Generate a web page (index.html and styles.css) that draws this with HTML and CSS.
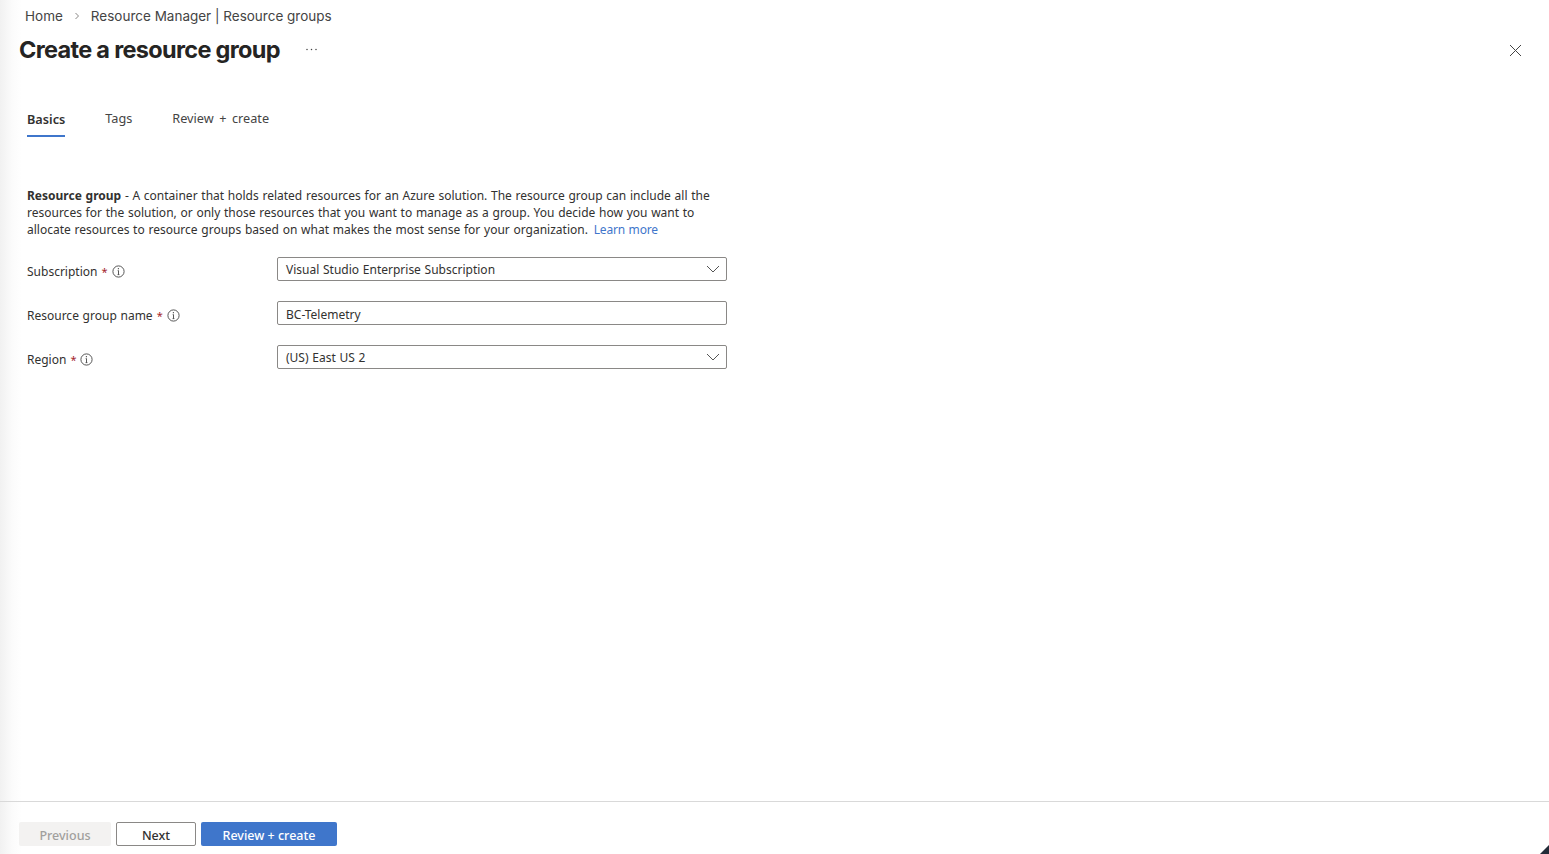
FILE: index.html
```html
<!DOCTYPE html>
<html lang="en">
<head>
<meta charset="utf-8">
<title>Create a resource group</title>
<link rel="stylesheet" href="styles.css">
</head>
<body>
<div class="page">
  <header class="top">
    <nav class="crumbs">
      <span>Home</span>
      <svg class="crumb-sep" width="6" height="8" viewBox="0 0 6 8"><path d="M1.5 1l3 3-3 3" fill="none" stroke="#8a8886" stroke-width="1"/></svg>
      <span>Resource Manager | Resource groups</span>
    </nav>
    <div class="title-row">
      <h1 class="title">Create a resource group</h1>
      <svg class="more" width="11" height="3" viewBox="0 0 11 3"><circle cx="1" cy="1.5" r=".75" fill="#444"/><circle cx="5.5" cy="1.5" r=".75" fill="#444"/><circle cx="10" cy="1.5" r=".75" fill="#444"/></svg>
      <svg class="close" width="13" height="13" viewBox="0 0 13 13"><path d="M1 1l11 11M12 1L1 12" fill="none" stroke="#444" stroke-width="1"/></svg>
    </div>
  </header>
  <main class="main">
    <div class="tabs">
      <span class="tab tab-active">Basics</span>
      <span class="tab">Tags</span>
      <span class="tab">Review + create</span>
    </div>
    <p class="intro"><b>Resource group</b> - A container that holds related resources for an Azure solution. The resource group can include all the<br>resources for the solution, or only those resources that you want to manage as a group. You decide how you want to<br>allocate resources to resource groups based on what makes the most sense for your organization. <a class="link">Learn more</a></p>
    <div class="form">
      <label class="label">Subscription <i class="req">*</i>
        <svg class="info" width="13" height="13" viewBox="0 0 13 13"><circle cx="6.5" cy="6.5" r="5.6" fill="none" stroke="#444" stroke-width=".9"/><path d="M6.5 5.6v4M5.6 9.6h1.8M5.7 5.6h.8" fill="none" stroke="#444" stroke-width=".9"/><circle cx="6.4" cy="3.7" r=".65" fill="#444"/></svg>
      </label>
      <div class="field">Visual Studio Enterprise Subscription
        <svg class="chev" width="14" height="8" viewBox="0 0 14 8"><path d="M1 1l6 6 6-6" fill="none" stroke="#555" stroke-width="1"/></svg>
      </div>
      <label class="label">Resource group name <i class="req">*</i>
        <svg class="info" width="13" height="13" viewBox="0 0 13 13"><circle cx="6.5" cy="6.5" r="5.6" fill="none" stroke="#444" stroke-width=".9"/><path d="M6.5 5.6v4M5.6 9.6h1.8M5.7 5.6h.8" fill="none" stroke="#444" stroke-width=".9"/><circle cx="6.4" cy="3.7" r=".65" fill="#444"/></svg>
      </label>
      <div class="field field-input">BC-Telemetry</div>
      <label class="label">Region <i class="req">*</i>
        <svg class="info" width="13" height="13" viewBox="0 0 13 13"><circle cx="6.5" cy="6.5" r="5.6" fill="none" stroke="#444" stroke-width=".9"/><path d="M6.5 5.6v4M5.6 9.6h1.8M5.7 5.6h.8" fill="none" stroke="#444" stroke-width=".9"/><circle cx="6.4" cy="3.7" r=".65" fill="#444"/></svg>
      </label>
      <div class="field">(US) East US 2
        <svg class="chev" width="14" height="8" viewBox="0 0 14 8"><path d="M1 1l6 6 6-6" fill="none" stroke="#555" stroke-width="1"/></svg>
      </div>
    </div>
  </main>
  <footer class="footer">
    <button class="btn btn-disabled" type="button">Previous</button>
    <button class="btn btn-next" type="button">Next</button>
    <button class="btn btn-primary" type="button">Review + create</button>
  </footer>
  <div class="corner"></div>
</div>
</body>
</html>
```
FILE: styles.css
```css
* { box-sizing: border-box; }
html, body { margin: 0; height: 100%; overflow: hidden; }
body {
  font-family: "Noto Sans", "Open Sans", sans-serif;
  font-size: 12px;
  word-spacing: 0.6px;
  color: #323130;
  background: linear-gradient(to right, #f1f1f1 0, #fbfbfb 12px, #fff 22px);
}
.page {
  position: relative;
  height: 854px;
  display: flex;
  flex-direction: column;
}
.top { padding: 7px 26px 0 19px; }
.crumbs {
  display: flex;
  align-items: center;
  height: 18px;
  padding-left: 6px;
  font-family: Inter, sans-serif;
  font-size: 13.5px;
  word-spacing: 0;
  color: #444;
}
.crumb-sep { margin: 0 11px; }
.title-row {
  display: flex;
  align-items: center;
  height: 36px;
  margin-top: 6px;
}
.title {
  margin: 0;
  font-family: Inter, sans-serif;
  font-size: 23.5px;
  font-weight: 700;
  letter-spacing: -0.69px;
  word-spacing: 0;
  color: #252423;
}
.more { margin-left: 26px; }
.close { margin-left: auto; margin-right: 1px; margin-top: 2px; }
.main { flex: 1; padding: 0 27px; }
.tabs {
  display: flex;
  gap: 40px;
  margin-top: 40px;
  font-size: 12.7px;
  word-spacing: 2.2px;
}
.tab { height: 30px; padding-top: 2px; color: #444; }
.tab-active {
  font-weight: 600;
  padding-top: 3px;
  border-bottom: 2px solid #3f76cb;
  color: #323130;
}
.intro { margin: 50px 0 0; line-height: 17px; white-space: nowrap; }
.intro b { font-weight: 700; }
.link { color: #3f76cb; margin-left: 2px; letter-spacing: -0.15px; }
.form {
  display: grid;
  grid-template-columns: 250px 450px;
  grid-auto-rows: 24px;
  row-gap: 20px;
  margin-top: 19px;
}
.label { display: flex; align-items: center; gap: 4px; padding-top: 4px; }
.req { color: #a4262c; font-style: normal; font-size: 11px; }
.field {
  display: flex;
  align-items: center;
  justify-content: space-between;
  padding: 0 6px 0 8px;
  background: #fff;
  border: 1px solid #8a8886;
  border-radius: 2px;
}
.field-input { padding-top: 2px; }
.footer {
  height: 53px;
  display: flex;
  gap: 5px;
  padding: 20px 0 0 19px;
  border-top: 1px solid #d9d9d9;
}
.btn {
  height: 24px;
  padding: 3px 0 0;
  font: 500 12.5px "Noto Sans", "Open Sans", sans-serif;
  border-radius: 2px;
  border: 1px solid transparent;
}
.btn-disabled { width: 92px; background: #f3f2f1; color: #a19f9d; }
.btn-next { width: 80px; background: #fff; border-color: #8a8886; color: #323130; }
.btn-primary { width: 136px; background: #3f76cb; color: #fff; }
.corner {
  position: absolute;
  right: 0;
  bottom: 0;
  width: 0;
  height: 0;
  border-style: solid;
  border-width: 0 0 9px 9px;
  border-color: transparent transparent #222b38 transparent;
}
```
